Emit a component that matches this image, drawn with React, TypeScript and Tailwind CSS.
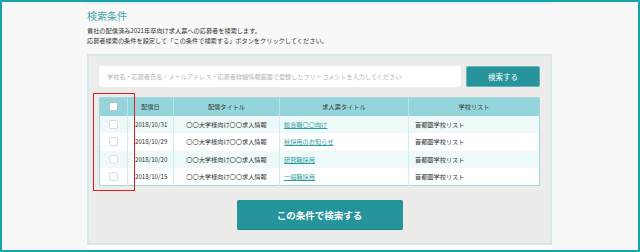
const rows = [
  { date: '2018/10/31', title: '〇〇大学様向け〇〇求人情報', job: '総合職〇〇向け', list: '首都圏学校リスト' },
  { date: '2018/10/29', title: '〇〇大学様向け〇〇求人情報', job: '秋採用のお知らせ', list: '首都圏学校リスト' },
  { date: '2018/10/20', title: '〇〇大学様向け〇〇求人情報', job: '研究職採用', list: '首都圏学校リスト' },
  { date: '2018/10/15', title: '〇〇大学様向け〇〇求人情報', job: '一般職採用', list: '首都圏学校リスト' },
]

function Checkbox({ light }: { light?: boolean }) {
  return (
    <span
      className={`mx-auto block h-[9px] w-[9px] rounded-[2px] border bg-white ${
        light ? 'border-[#dcdcdc]' : 'border-[#bdbdbd]'
      }`}
    />
  )
}

export default function App() {
  return (
    <div className="h-[252px] w-[640px] overflow-hidden border-2 border-[#17a3ad] bg-[#f8f8f8] font-['Noto_Sans_CJK_JP','Noto_Sans',sans-serif] text-[#333]">
      <div className="ml-[85px] w-[465px]">
        {/* bottom of previous panel */}
        <div className="h-[2px] w-full bg-[#e4f2f2]" />

        {/* Header */}
        <h2 className="mt-[5px] text-[10px] leading-[14px] text-[#3fa7aa]">検索条件</h2>
        <div className="mt-[3px] text-[6.2px] leading-[10px] text-[#333]">
          <p>貴社の配信済み2021年卒向け求人票への応募者を検索します。</p>
          <p>応募者検索の条件を設定して「この条件で検索する」ボタンをクリックしてください。</p>
        </div>

        {/* Search panel */}
        <div className="relative mt-[8px] flex h-[191px] flex-col border-2 border-[#d4e9e8] bg-[#ecedea] px-[10px] pt-[10px]">
          <div className="flex h-[21px] gap-[5px]">
            <div className="flex flex-1 items-center rounded-[3px] bg-white pl-[8px] text-[6.15px] text-[#b5b5b5]">
              学校名・応募者氏名・メールアドレス・応募者詳細情報画面で登録したフリーコメントを入力してください
            </div>
            <button className="w-[74px] rounded-[2px] border border-[#5fb5b9] bg-[#27939a] text-[7.5px] text-white">
              検索する
            </button>
          </div>

          <table className="mt-[10px] w-full table-fixed border-collapse border border-[#a3d9dc] text-[6.2px]">
            <colgroup>
              <col className="w-[28px]" />
              <col className="w-[46px]" />
              <col className="w-[106px]" />
              <col className="w-[129px]" />
              <col />
            </colgroup>
            <thead>
              <tr className="h-[18px] bg-[#93d5da] text-[#3a3a3a]">
                <th className="border-r border-[#b8e4e7] font-normal">
                  <Checkbox />
                </th>
                <th className="border-r border-[#b8e4e7] font-normal">配信日</th>
                <th className="border-r border-[#b8e4e7] font-normal">配信タイトル</th>
                <th className="border-r border-[#b8e4e7] font-normal">求人票タイトル</th>
                <th className="font-normal">学校リスト</th>
              </tr>
            </thead>
            <tbody>
              {rows.map((r, i) => (
                <tr key={r.date} className={`h-[17.6px] ${i % 2 === 0 ? 'bg-[#eefafa]' : 'bg-white'}`}>
                  <td className="border-r border-[#d3eef0]">
                    <Checkbox light />
                  </td>
                  <td className="border-r border-[#d3eef0] pl-[7px]">{r.date}</td>
                  <td className="border-r border-[#d3eef0] text-center">{r.title}</td>
                  <td className="border-r border-[#d3eef0] pl-[4px]">
                    <a className="text-[#2d9ca2] underline">{r.job}</a>
                  </td>
                  <td className="pl-[6px]">{r.list}</td>
                </tr>
              ))}
            </tbody>
          </table>

          <button className="mx-auto mt-[14px] h-[30px] w-[166px] rounded-[2px] border-b border-[#1d7f84] bg-[#26959b] text-[9.5px] font-bold text-white">
            この条件で検索する
          </button>

          {/* annotation box */}
          <div className="absolute left-[4px] top-[37px] h-[98px] w-[42px] border border-[#e0201f]" />
        </div>

        <div className="h-[5px] w-full bg-white" />
      </div>
    </div>
  )
}
